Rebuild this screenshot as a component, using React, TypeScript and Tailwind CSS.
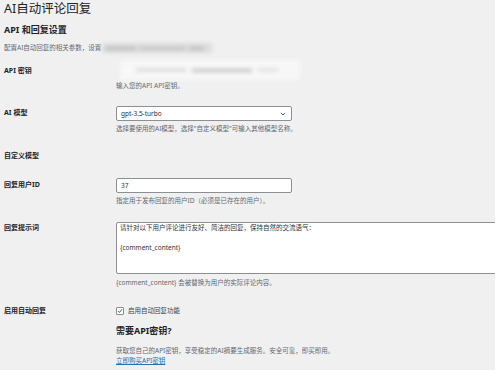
import { useState } from "react";

const label = "w-[112px] shrink-0 text-[7px] leading-[10px] font-bold text-[#1d2327]";
const desc = "text-[6.5px] leading-[10px] text-[#646970]";

const App = () => {
  const [enabled, setEnabled] = useState(true);
  const [userId, setUserId] = useState("37");
  const [prompt, setPrompt] = useState(
    "请针对以下用户评论进行友好、简洁的回复，保持自然的交流语气：\n\n{comment_content}"
  );

  return (
    <div
      className="w-[495px] h-[370px] overflow-hidden bg-[#f0f0f1] pl-[4px] text-[#3c434a]"
      style={{ fontFamily: '"Noto Sans", "Noto Sans CJK SC", sans-serif' }}
    >
      <h1 className="pt-[1px] text-[12.5px] leading-[16px] font-normal text-[#1d2327]">AI自动评论回复</h1>
      <h2 className="mt-[7px] text-[9px] leading-[12px] font-bold text-[#1d2327]">API 和回复设置</h2>
      <p className={`mt-[7px] ${desc} text-[#3c434a] flex items-center`}>
        配置AI自动回复的相关参数，设置
        <span className="ml-[1px] w-[110px] h-[10px] bg-[#dcdcdc] blur-[2px] flex items-center gap-[4px] px-[4px]">
          <span className="w-[30px] h-[3px] bg-[#bcbcbc]" />
          <span className="w-[45px] h-[3px] bg-[#c4c4c4]" />
          <span className="w-[15px] h-[3px] bg-[#bcbcbc]" />
        </span>
      </p>

      {/* API key */}
      <div className="mt-[7px] flex">
        <div className={`${label} pt-[6px]`}>API 密钥</div>
        <div>
          <div className="ml-[4px] w-[180px] h-[20px] bg-[#f7f7f7] blur-[2px] flex items-center px-[6px] gap-[6px]">
            <span className="w-[4px] h-[4px] bg-white" />
            <span className="w-[50px] h-[2px] bg-[#c8c8c8]" />
            <span className="w-[60px] h-[3px] bg-[#bdbdbd]" />
            <span className="w-[20px] h-[2px] bg-[#d0d0d0]" />
          </div>
          <p className={`mt-[1px] ${desc}`}>输入您的API API密钥。</p>
        </div>
      </div>

      {/* model */}
      <div className="mt-[15px] flex">
        <div className={`${label} pt-[2px]`}>AI 模型</div>
        <div>
          <div className="w-[176px] h-[15px] bg-white border border-[#8c8f94] rounded-[2px] flex items-center justify-between pl-[4px] pr-[5px]">
            <span className="text-[6.5px] text-[#2c3338]">gpt-3.5-turbo</span>
            <svg width="6" height="4" viewBox="0 0 6 4" fill="none">
              <path d="M0.8 0.8 L3 3 L5.2 0.8" stroke="#50575e" strokeWidth="0.9" />
            </svg>
          </div>
          <p className={`mt-[3px] ${desc}`}>选择要使用的AI模型，选择"自定义模型"可输入其他模型名称。</p>
        </div>
      </div>

      {/* custom model */}
      <div className="mt-[17px] flex">
        <div className={label}>自定义模型</div>
      </div>

      {/* user id */}
      <div className="mt-[17px] flex">
        <div className={`${label} pt-[2px]`}>回复用户ID</div>
        <div>
          <input
            value={userId}
            onChange={(e) => setUserId(e.target.value)}
            className="block w-[176px] h-[15px] bg-white border border-[#8c8f94] rounded-[2px] px-[4px] text-[6.5px] text-[#2c3338] outline-none"
          />
          <p className={`mt-[3px] ${desc}`}>指定用于发布回复的用户ID（必须是已存在的用户）。</p>
        </div>
      </div>

      {/* prompt */}
      <div className="mt-[16px] flex">
        <div className={`${label} pt-[1px]`}>回复提示词</div>
        <div>
          <textarea
            value={prompt}
            onChange={(e) => setPrompt(e.target.value)}
            className="block w-[400px] h-[52px] bg-white border border-[#8c8f94] rounded-[2px] px-[3px] pt-[0px] text-[6.5px] leading-[10px] text-[#2c3338] resize-none outline-none"
          />
          <p className={`mt-[4px] ${desc}`}>{"{comment_content} 会被替换为用户的实际评论内容。"}</p>
        </div>
      </div>

      {/* enable */}
      <div className="mt-[18px] flex">
        <div className={label}>启用自动回复</div>
        <div>
          <label className="flex items-center h-[10px] gap-[4px] text-[6.5px] text-[#3c434a]">
            <span
              onClick={() => setEnabled(!enabled)}
              className="w-[8px] h-[8px] bg-white border border-[#8c8f94] rounded-[1px] flex items-center justify-center"
            >
              {enabled && (
                <svg width="6" height="6" viewBox="0 0 6 6" fill="none">
                  <path d="M1 3.1 L2.4 4.5 L5 1.2" stroke="#2271b1" strokeWidth="1" />
                </svg>
              )}
            </span>
            启用自动回复功能
          </label>
          <h3 className="mt-[9px] text-[9px] leading-[12px] font-bold text-[#1d2327]">需要API密钥?</h3>
          <p className={`mt-[9px] ${desc} leading-[9px]`}>
            获取您自己的API密钥，享受稳定的AI摘要生成服务。安全可靠，即买即用。
          </p>
          <a href="#" className="block text-[6.5px] leading-[9px] text-[#2271b1] underline">
            立即购买API密钥
          </a>
        </div>
      </div>
    </div>
  );
};

export default App;
